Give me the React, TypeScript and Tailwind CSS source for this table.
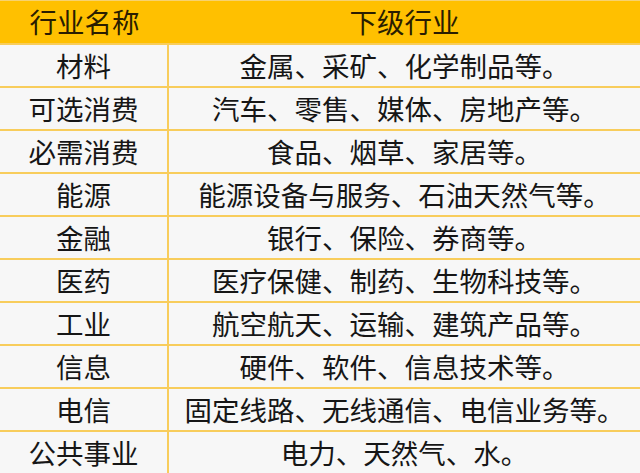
import React from "react";

const rows: [string, string][] = [
  ["材料", "金属、采矿、化学制品等。"],
  ["可选消费", "汽车、零售、媒体、房地产等。"],
  ["必需消费", "食品、烟草、家居等。"],
  ["能源", "能源设备与服务、石油天然气等。"],
  ["金融", "银行、保险、券商等。"],
  ["医药", "医疗保健、制药、生物科技等。"],
  ["工业", "航空航天、运输、建筑产品等。"],
  ["信息", "硬件、软件、信息技术等。"],
  ["电信", "固定线路、无线通信、电信业务等。"],
  ["公共事业", "电力、天然气、水。"],
];

export default function App() {
  return (
    <div
      className="w-[640px] h-[473px] bg-[#f7f7f7] text-[27.5px] text-[#161616] overflow-hidden"
      style={{ fontFamily: '"Noto Sans CJK SC", "Noto Sans", sans-serif' }}
    >
      <div className="grid grid-cols-[169px_1fr] h-[43px] bg-[#ffc000] border-t border-[#f7d26f] leading-none">
        <div className="flex items-center justify-center text-[#2a1d00]">行业名称</div>
        <div className="flex items-center justify-center text-[#2a1d00]">下级行业</div>
      </div>
      {rows.map(([a, b]) => (
        <div
          key={a}
          className="grid grid-cols-[169px_1fr] h-[43px] border-t-2 border-[#f8cd5c] leading-none"
        >
          <div className="flex items-center justify-center border-r-2 border-[#f8cd5c]">{a}</div>
          <div className="flex items-center justify-center">{b}</div>
        </div>
      ))}
    </div>
  );
}
